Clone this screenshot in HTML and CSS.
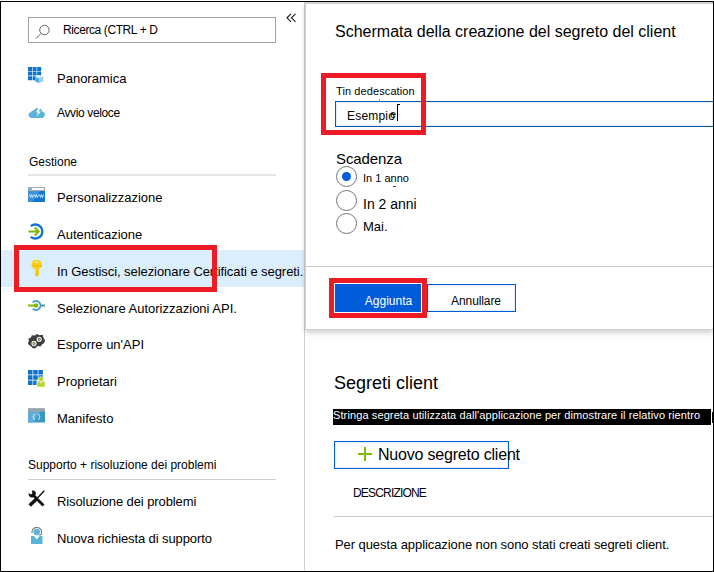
FILE: index.html
```html
<!DOCTYPE html>
<html lang="it">
<head>
<meta charset="utf-8">
<title>Certificati e segreti</title>
<link rel="stylesheet" href="styles.css">
</head>
<body>
<div class="frame">
  <aside class="sidebar">
    <div class="search-row">
      <div class="search">
        <svg width="16" height="16" viewBox="0 0 16 16" fill="none" stroke="#666"><circle cx="9.4" cy="6" r="4.7"/><path d="M6 9.5L.8 14.8"/></svg>
        <span>Ricerca (CTRL + D</span>
      </div>
      <svg class="collapse" width="11" height="10" viewBox="0 0 11 10" fill="none" stroke="#222" stroke-width="1.2"><path d="M5 .8L1 4.8l4 4M9.5 .8l-4 4 4 4"/></svg>
    </div>
    <nav class="menu menu-top">
      <a class="item"><svg class="icon" viewBox="0 0 17 17"><path fill="#0f72c9" d="M0 0h4v4H0zM4.6 0h4v4h-4zM9.2 0h4v4h-4zM0 4.6h4v4H0zM4.6 4.6h4v4h-4zM9.2 4.6h4v4h-4zM0 9.2h4v4H0zM4.6 9.2h4v4h-4z"/><path fill="#9bd3ec" d="M7 9.600l4-1.600 4.500 1.600v4.600L11 16l-4-1.800z"/><path fill="#4faedb" d="M7 10l4 1.600V16l-4-1.800z"/><path fill="#d4eef8" d="M7 9.600L11 8l4.500 1.600L11 11.300z"/></svg><span>Panoramica</span></a>
      <a class="item quick"><svg class="icon" viewBox="0 0 17 17"><path fill="#59b4d9" d="M3.200 14A3.100 3.100 0 0 1 3 7.900 3 3 0 0 1 6 6.300 4.400 4.400 0 0 1 14.200 7.500 3.300 3.300 0 0 1 14 14z"/><path fill="#fff" d="M10.500 4L8 8.500h2.200L8.800 12.500l4-5h-2.300L12.500 4z"/></svg><span>Avvio veloce</span></a>
    </nav>
    <h3 class="group">Gestione</h3>
    <nav class="menu">
      <a class="item"><svg class="icon" viewBox="0 0 17 17"><path fill="#0f78d1" d="M0 1h17v15H0z"/><path fill="#a6a8ab" d="M0 1h17v4H0z"/><path fill="#fff" d="M3.800 2h12v2h-12z"/><path fill="#59b4d9" d="M1 2h2v2H1z"/><path fill="#3b92dc" d="M0 5h12L4 16H0z"/><path fill="none" stroke="#d9edfa" stroke-width=".9" d="M1.500 8.500l1 3 1-3 1 3 1-3M6.500 8.500l1 3 1-3 1 3 1-3M11.500 8.500l1 3 1-3 1 3 1-3"/></svg><span>Personalizzazione</span></a>
      <a class="item"><svg class="icon" viewBox="0 0 17 17" fill="none"><path stroke="#1274cc" stroke-width="2.400" d="M2.800 3.200a7 7 0 1 1 0 10.600"/><path stroke="#7fba00" stroke-width="2" d="M.5 8.500h10M6.700 4.500l4.100 4-4.100 4"/></svg><span>Autenticazione</span></a>
      <a class="item selected"><svg class="icon" viewBox="0 0 17 17"><path fill="#fcd116" d="M5.800 0h5.400L14 3v3.500L10.800 9.500v5.700L8.700 17 7 15.500V9.500L3.500 6.500V3z"/><path fill="#ddecf8" d="M7 1.600h3.200v1.200H7z"/><path fill="#e9b311" d="M9.200 9.500h1v5.800l-1 1zM4 5.200h9.500v1H4z"/></svg><span class="tight">In Gestisci, selezionare Certificati e segreti.</span></a>
      <a class="item short"><svg class="icon" viewBox="0 0 17 17" fill="none"><path stroke="#3999c6" stroke-width="1.800" d="M4.800 5.300a4.500 4.500 0 1 1 0 6.400M13 8.500h4"/><circle cx="8" cy="8.500" r="2.300" fill="#7fba00"/><path stroke="#7fba00" stroke-width="2" d="M0 8.500h8"/></svg><span>Selezionare Autorizzazioni API.</span></a>
      <a class="item"><svg class="icon" viewBox="0 0 17 17"><path fill="#3e3e3e" d="M3 13.500L0 11l.8-3L.5 5.500 3 4.500l.8-2.300 3 .2L9 1l2.500 1.200 3.200-.4L15.500 5l1.500 2-.8 3L14 11.500l-1.500 2-3-.5-2.500 2.500-2-.3z"/><g fill="none" stroke="#e5e5e5" stroke-width="1.300"><circle cx="6" cy="10.500" r="2"/><circle cx="11.200" cy="6.300" r="2"/></g><circle cx="6" cy="10.500" r=".9" fill="#b8d432"/><circle cx="11.200" cy="6.300" r=".9" fill="#b8d432"/></svg><span>Esporre un'API</span></a>
      <a class="item"><svg class="icon" viewBox="0 0 17 17"><path fill="#0f72c9" d="M0 0h4.500v4.500H0zM5.200 0h4.500v4.500H5.200zM10.400 0h4.500v4.500h-4.500zM0 5.200h4.500v4.500H0zM5.200 5.200h4.500v4.500H5.200zM10.400 5.200h4.500v3h-4.500zM0 10.400h4.500v4.500H0zM5.200 10.400h3.500v4.500H5.200z"/><path fill="#b8d432" stroke="#fff" stroke-width=".5" d="M9 17v-4.500l1.500-1.500h5l1.500 1.500V17z"/><circle cx="13" cy="9" r="2.600" fill="#b8d432" stroke="#fff" stroke-width=".4"/><path fill="#e8f3bd" d="M11.500 11.500h3L13 14z"/></svg><span>Proprietari</span></a>
      <a class="item"><svg class="icon" viewBox="0 0 17 17"><path fill="#3999c6" d="M0 1.500h17v14H0z"/><path fill="#5cafd6" d="M0 4h13L5 15.500H0z"/><path fill="#a0a1a2" d="M0 1.500h17v3H0z"/><path fill="none" stroke="#e5f4fb" d="M7 7.300q-1.300 0-1.200 1.200 0 1.400-1 1.400 1 0 1 1.300 0 1.300 1.200 1.300M10 7.300q1.300 0 1.200 1.200 0 1.400 1 1.400-1 0-1 1.300 0 1.300-1.200 1.300"/></svg><span>Manifesto</span></a>
    </nav>
    <h3 class="group support">Supporto + risoluzione dei problemi</h3>
    <nav class="menu">
      <a class="item"><svg class="icon" viewBox="0 0 17 17"><path fill="none" stroke="#111" stroke-width="2.800" d="M4.500 4.500l11 11"/><path fill="#111" d="M.5 3l2.300 1.500L4.300 3.500 4 .6c3-.8 4.600 2 3.500 4.400L5 7.200C2.500 8 .3 6 .5 3z"/><path fill="none" stroke="#111" stroke-width="1.400" d="M16.300 .7L8 9.500"/><path fill="none" stroke="#111" stroke-width="3.400" d="M8 9.500l-6.300 6"/></svg><span class="tighter">Risoluzione dei problemi</span></a>
      <a class="item"><svg class="icon" viewBox="0 0 17 17"><path fill="#59b4d9" d="M3 9h11.500v8H3z"/><path fill="#fff" d="M5.500 8.500h6.500L8.700 12.500z"/><circle cx="8.700" cy="5" r="3.300" fill="#59b4d9"/><path fill="none" stroke="#777" stroke-width="1.100" d="M4 6V4.500C5-.9 12.500-.9 13.500 4.500V7l-2 1.500"/></svg><span class="tighter">Nuova richiesta di supporto</span></a>
    </nav>
    <div class="mark mark-nav"></div>
  </aside>

  <main class="content">
    <section class="panel">
      <h1 class="title">Schermata della creazione del segreto del client</h1>
      <label class="field-label">Tin dedescation</label>
      <div class="field">Esempio<span class="ghost">e</span><span class="caret"></span></div>
      <div class="tick"></div>
      <h2 class="expires">Scadenza</h2>
      <div class="options">
        <div class="option first"><span class="radio on"></span><span>In 1 anno</span></div>
        <div class="option second"><span class="radio"></span><span>In 2 anni</span></div>
        <div class="option third"><span class="radio"></span><span>Mai.</span></div>
      </div>
      <div class="dash"></div>
      <div class="actions">
        <button class="btn primary">Aggiunta</button>
        <button class="btn">Annullare</button>
      </div>
      <div class="mark mark-field"></div>
      <div class="mark mark-add"></div>
    </section>
    <section class="secrets">
      <h2 class="heading">Segreti client</h2>
      <div class="notice"><p>Stringa segreta utilizzata dall'applicazione per dimostrare il relativo rientro</p><i></i></div>
      <button class="new-secret"><svg width="14" height="14" viewBox="0 0 14 14"><path fill="#7fba00" d="M6 0h2v6h6v2H8v6H6V8H0V6h6z"/></svg><span>Nuovo segreto client</span></button>
      <div class="table-head">DESCRIZIONE</div>
      <p class="empty">Per questa applicazione non sono stati creati segreti client.</p>
    </section>
  </main>
</div>
</body>
</html>
```
FILE: styles.css
```css
* { box-sizing: border-box; }

body {
  margin: 0;
  background: #fff;
  color: #000;
  font-family: "Liberation Sans", Arial, sans-serif;
  font-size: 13px;
  overflow: hidden;
}

h1, h2, h3, p { margin: 0; font-weight: normal; }

button { font-family: inherit; color: #000; margin: 0; padding: 0; background: #fff; }

svg { display: block; flex: none; }

.frame {
  display: flex;
  width: 714px;
  height: 571px;
  margin-top: 1px;
  border: 1px solid #000;
  overflow: hidden;
}

/* Sidebar */
.sidebar {
  position: relative;
  flex: none;
  width: 304px;
  border-right: 1px solid #d0d0d0;
}

.search-row { display: flex; padding: 15px 0 0 27px; }

.search {
  display: flex;
  align-items: center;
  gap: 12px;
  width: 248px;
  height: 26px;
  padding-left: 6px;
  border: 1px solid #a0a0a0;
  font-size: 12px;
  letter-spacing: -0.4px;
}

.search svg { margin-top: 3px; }

.collapse { margin: -4px 0 0 10px; }

.menu { display: flex; flex-direction: column; }

.menu-top { margin-top: 14px; }

.item {
  display: flex;
  align-items: center;
  gap: 12px;
  flex: none;
  height: 37px;
  padding-left: 27px;
  white-space: nowrap;
}

.item span { padding-top: 6px; line-height: 15px; }

.item.short { height: 36px; }

.item.quick { height: 36px; font-size: 12px; letter-spacing: -0.36px; }

.item.quick span { padding-top: 3px; }

.item.selected { background: #dbeefe; }

.icon { width: 17px; height: 17px; }

.tight { letter-spacing: -0.065px; }

.tighter { letter-spacing: -0.1px; }

.group {
  width: 248px;
  height: 26px;
  margin: 20px 0 0 27px;
  padding-left: 1px;
  border-bottom: 2px solid #e6e6e6;
  font-size: 12px;
  line-height: 25px;
}

.group.support {
  height: 27px;
  margin-top: 19px;
  padding-left: 0;
  border-bottom: 1px solid #d0d0d0;
}

/* Red callouts around the steps */
.mark { position: absolute; border: 5px solid #ed1c24; }

.mark-nav { left: 13px; top: 243px; width: 203px; height: 47px; }

.mark-field { left: 15px; top: 69px; width: 105px; height: 62px; }

.mark-add { left: 23px; top: 274px; width: 98px; height: 40px; }

/* Right side */
.content { flex: 1; min-width: 0; }

.panel {
  position: relative;
  height: 328px;
  border: 1px solid #d0d0d0;
  border-top-width: 2px;
  border-right: 0;
  box-shadow: 0 3px 5px rgba(0, 0, 0, 0.18);
}

.title {
  padding: 18px 0 0 29px;
  font-size: 16px;
  line-height: 20px;
  white-space: nowrap;
}

.field-label {
  display: block;
  margin: 42px 0 0 30px;
  font-size: 11px;
  line-height: 14px;
  letter-spacing: 0.1px;
}

.field {
  display: flex;
  height: 26px;
  margin: 3px 0 0 29px;
  padding: 2px 0 0 11px;
  border: 1px solid #0b58a5;
  border-right: 0;
  box-shadow: inset 0 0 0 1px #e6eff8;
  font-size: 12px;
  line-height: 24px;
  letter-spacing: 0.2px;
}

.ghost { margin-left: -5px; font-size: 11px; line-height: 20px; }

.caret { width: 3px; height: 17px; margin-left: 1px; border-left: 1px solid #000; border-top: 1px solid #000; }

.tick { position: absolute; left: 73px; top: 95px; width: 1px; height: 3px; background: #888; }

.dash { position: absolute; left: 87px; top: 182px; width: 3px; height: 1px; background: #333; }

.expires {
  margin: 23px 0 0 30px;
  font-size: 15px;
  line-height: 17px;
  letter-spacing: -0.1px;
}

.options { display: flex; flex-direction: column; height: 99px; padding: 0 0 0 30px; }

.option { display: flex; align-items: center; gap: 6px; flex: none; height: 23.500px; }

.option span:last-child { line-height: 16px; }

.radio {
  display: flex;
  align-items: center;
  justify-content: center;
  width: 21px;
  height: 21px;
  border: 1px solid #767676;
  border-radius: 50%;
}

.radio.on::before { content: ""; width: 9px; height: 9px; border-radius: 50%; background: #015cda; }

.first { margin-top: -2px; font-size: 11px; }

.first span:last-child { padding-top: 3px; }

.second { font-size: 14px; }

.second span:last-child { padding-top: 8px; }

.third { font-size: 13px; }

.third span:last-child { padding-top: 6px; }

.actions {
  display: flex;
  gap: 6px;
  border-top: 1px solid #c8c8c8;
  padding: 17px 0 0 29px;
}

.btn {
  width: 89px;
  height: 28px;
  padding: 5px 0 0 9px;
  border: 1px solid #015cda;
  box-shadow: inset 0 0 0 1px #e3edfa;
  font-size: 12px;
  letter-spacing: -0.1px;
}

.btn.primary { width: 86px; padding-left: 21px; background: #015cda; box-shadow: 0 0 0 1px #fff; color: #fff; letter-spacing: 0; }

.secrets { padding-left: 29px; }

.heading { padding-top: 42px; font-size: 18px; line-height: 22px; }

.notice { display: flex; gap: 1px; margin: 15px 0 0 -1px; height: 16px; }

.notice p {
  flex: none;
  width: 378px;
  background: #000;
  color: #fff;
  font-size: 11px;
  line-height: 13px;
  letter-spacing: 0.11px;
  white-space: nowrap;
}

.notice i { width: 1px; height: 11px; margin-top: 3px; background: #000; }

.new-secret {
  display: flex;
  align-items: center;
  gap: 6px;
  width: 175px;
  height: 28px;
  margin-top: 16px;
  padding-left: 23px;
  border: 1px solid #015cda;
  box-shadow: inset 0 0 0 1px #e3edfa;
  font-size: 16px;
  letter-spacing: -0.2px;
  white-space: nowrap;
}

.new-secret svg { margin-top: -2px; }

.table-head {
  height: 48px;
  padding: 15px 0 0 19px;
  border-bottom: 1px solid #c8c8c8;
  font-size: 12px;
  line-height: 18px;
  letter-spacing: -0.82px;
}

.empty { padding: 19px 0 0 1px; line-height: 18px; letter-spacing: -0.075px; white-space: nowrap; }
```
